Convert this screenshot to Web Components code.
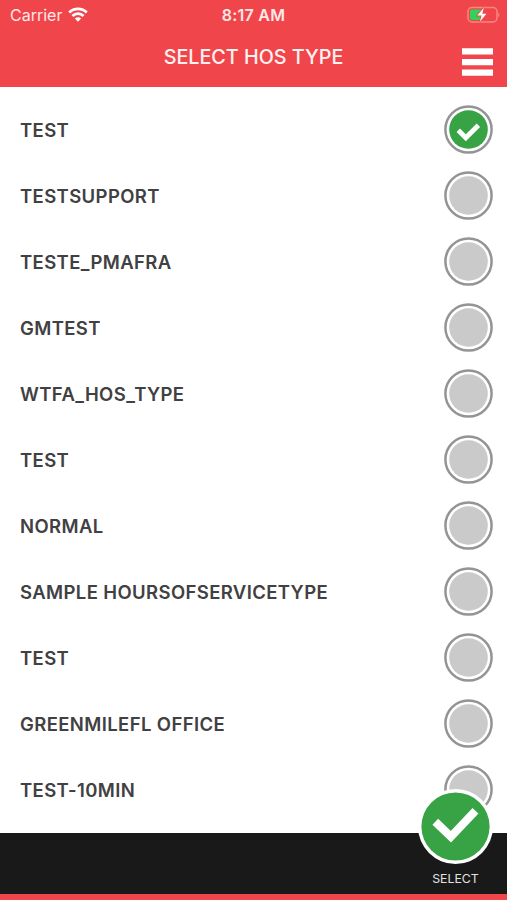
<!DOCTYPE html>
<html lang="en">
<head>
<meta charset="utf-8">
<title>Select HOS Type</title>
<style>
  html,
  body {
    margin: 0;
    height: 100%;
    overflow: hidden;
  }

  body {
    font-family: Inter, "Liberation Sans", sans-serif;
    background: #fff;
  }
</style>
</head>
<body>
<hos-screen>
  <status-bar slot="header">
    <span slot="carrier">Carrier</span>
    <span slot="time">8:17 AM</span>
  </status-bar>
  <title-bar slot="header">SELECT HOS TYPE</title-bar>
  <hos-option checked>TEST</hos-option>
  <hos-option>TESTSUPPORT</hos-option>
  <hos-option>TESTE_PMAFRA</hos-option>
  <hos-option>GMTEST</hos-option>
  <hos-option>WTFA_HOS_TYPE</hos-option>
  <hos-option>TEST</hos-option>
  <hos-option>NORMAL</hos-option>
  <hos-option>SAMPLE HOURSOFSERVICETYPE</hos-option>
  <hos-option>TEST</hos-option>
  <hos-option>GREENMILEFL OFFICE</hos-option>
  <hos-option>TEST-10MIN</hos-option>
  <action-bar slot="footer">SELECT</action-bar>
</hos-screen>

<script>
const define = (name, html) => {
  const template = document.createElement('template')
  template.innerHTML = html

  customElements.define(name,
    class extends HTMLElement {
      constructor() {
        super()
        this.attachShadow({ mode: 'open' })
        this.shadowRoot.appendChild(template.content.cloneNode(true))
      }
    }
  )
}

define('hos-screen', `
  <style>
    :host {
      display: grid;
      grid-template-rows: 87px minmax(0, 1fr) 67.5px;
      height: 100vh;
      box-sizing: border-box;
    }

    header {
      background: #f0464b;
    }

    main {
      overflow: hidden;
      padding-top: 9.5px;
    }
  </style>
  <header><slot name="header"></slot></header>
  <main><slot></slot></main>
  <slot name="footer"></slot>
`)

define('status-bar', `
  <style>
    :host {
      display: grid;
      grid-template-columns: 1fr auto 1fr;
      align-items: center;
      height: 30px;
      padding: 0 7px 0 10px;
      color: #ffe9e8;
      font-size: 16px;
      line-height: 30px;
    }

    .left {
      display: flex;
      align-items: center;
      gap: 6px;
    }

    .carrier {
      letter-spacing: 0;
    }

    .time {
      margin: 0 3px 0 0;
      font-weight: 600;
      letter-spacing: 0.25px;
    }

    svg {
      display: block;
    }

    .battery {
      justify-self: end;
    }
  </style>
  <div class="left">
    <span class="carrier"><slot name="carrier"></slot></span>
    <svg width="20" height="15.5" viewBox="0 0 21 16">
      <g fill="none" stroke="#fff" stroke-width="2.9">
        <path d="M1.3 5.7a13 13 0 0 1 18.4 0"/>
        <path d="M4.7 9.3a8.2 8.2 0 0 1 11.6 0"/>
      </g>
      <path fill="#fff" d="M10.5 15.3 7.2 12a4.7 4.7 0 0 1 6.6 0z"/>
    </svg>
  </div>
  <span class="time"><slot name="time"></slot></span>
  <svg class="battery" width="33" height="18" viewBox="0 0 33 18">
    <rect x="1" y="1.5" width="29" height="14.5" rx="4" fill="none" stroke="#f68881" stroke-width="1.5"/>
    <path fill="#f68881" d="M31.2 6.5c1.6.7 1.6 3.8 0 4.5z"/>
    <path fill="#32d158" d="M5 3.5h10v10.5H5a2 2 0 0 1-2-2V5.5a2 2 0 0 1 2-2z"/>
    <path fill="#fff" stroke="#f0464b" stroke-width="1.6" paint-order="stroke" d="M16.8 1.8 10.3 9.6h4.200l-1.600 6.200 6.600-8h-4.200z"/>
  </svg>
`)

define('title-bar', `
  <style>
    :host {
      display: grid;
      grid-template-columns: 1fr auto 1fr;
      height: 57px;
      padding: 0 14px;
      color: #fff2f1;
      font-size: 19.8px;
      letter-spacing: -0.03px;
    }

    h1 {
      grid-column: 2;
      margin: 0;
      font: inherit;
      font-weight: 450;
      line-height: 55px;
      white-space: nowrap;
    }

    svg {
      justify-self: end;
      margin-top: 18px;
    }
  </style>
  <h1><slot></slot></h1>
  <svg width="31" height="28" viewBox="0 0 31 28" fill="#fff">
    <path d="M0 .3h31v6.200H0zM0 11h31v6.200H0zM0 21.500h31v6.200H0z"/>
  </svg>
`)

define('hos-option', `
  <style>
    :host {
      display: flex;
      align-items: center;
      justify-content: space-between;
      height: 66.05px;
      padding: 0 14px 0 20px;
      color: #414042;
      font-size: 18.5px;
      font-weight: 600;
      letter-spacing: 0.38px;
    }

    svg {
      display: block;
      flex: none;
    }

    .dot {
      fill: #cacaca;
    }

    .check {
      display: none;
    }

    :host([checked]) .dot {
      fill: #37a345;
    }

    :host([checked]) .check {
      display: inline;
    }
  </style>
  <span><slot></slot></span>
  <svg width="49" height="49" viewBox="0 0 49 49">
    <circle cx="24.5" cy="24.5" r="23.1" fill="#fff" stroke="#949496" stroke-width="2.5"/>
    <circle class="dot" cx="24.5" cy="24.5" r="19.3"/>
    <path class="check" fill="none" stroke="#fff" stroke-width="4.8" d="m14.300 25.300 7.500 7.500 12.600-12.600"/>
  </svg>
`)

define('action-bar', `
  <style>
    :host {
      display: flex;
      justify-content: flex-end;
      box-sizing: border-box;
      position: relative;
      border-bottom: 6.5px solid #f0464b;
      padding-right: 13px;
      background: #191919;
      color: #e2e2e2;
      font-size: 12.3px;
    }

    button {
      display: flex;
      flex-direction: column;
      align-items: center;
      width: 77px;
      margin: -45px 0 0;
      border: 0;
      padding: 0;
      background: none;
      color: inherit;
      font: inherit;
      letter-spacing: 0;
      line-height: 16px;
    }

    svg {
      display: block;
      flex: none;
      margin-bottom: 6px;
    }
  </style>
  <button>
    <svg width="77" height="77" viewBox="0 0 77 77">
      <circle cx="38.5" cy="38.5" r="37.5" fill="#fff"/>
      <circle cx="38.5" cy="38.5" r="34.1" fill="#37a345"/>
      <path fill="none" stroke="#fff" stroke-width="8.2" d="m18.300 33.800 15.600 15 24.600-26"/>
    </svg>
    <span><slot></slot></span>
  </button>
`)
</script>
</body>
</html>
